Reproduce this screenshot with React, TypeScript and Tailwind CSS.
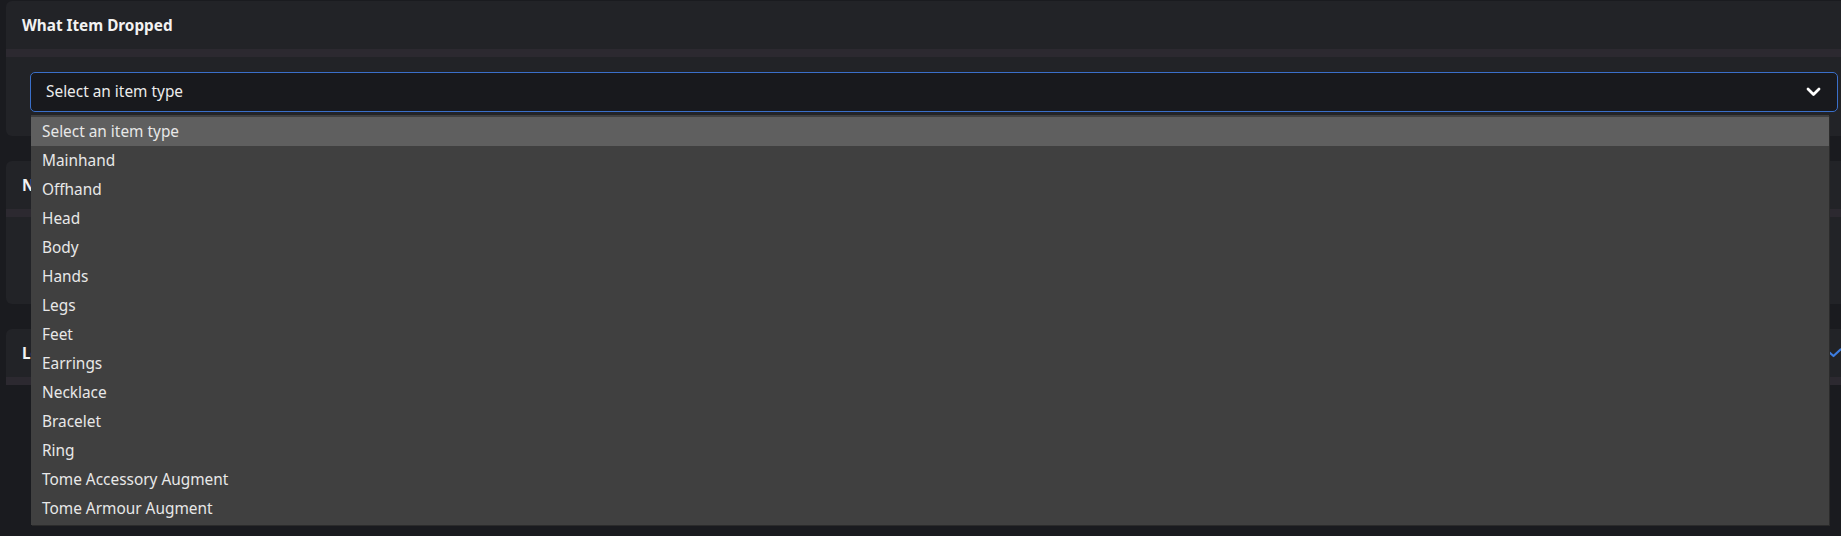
import React from 'react';

const itemTypes = [
  'Select an item type',
  'Mainhand',
  'Offhand',
  'Head',
  'Body',
  'Hands',
  'Legs',
  'Feet',
  'Earrings',
  'Necklace',
  'Bracelet',
  'Ring',
  'Tome Accessory Augment',
  'Tome Armour Augment',
];

const Card: React.FC<{ title: string; right?: React.ReactNode; bodyClass?: string; children?: React.ReactNode }> = ({
  title,
  right,
  bodyClass,
  children,
}) => (
  <div className="w-[1856px] rounded-md bg-[#222327] overflow-visible">
    <div className="h-[48px] flex items-center justify-between px-4">
      <span className="text-[15.3px] font-bold text-[#f2f2f2]">{title}</span>
      {right}
    </div>
    <div className="h-[8px] bg-[#2c2930]" />
    {bodyClass !== undefined && <div className={bodyClass}>{children}</div>}
  </div>
);

export default function App() {
  return (
    <div
      className="h-[536px] w-full overflow-hidden bg-[#1a1b1f] pt-px pl-[6px]"
      style={{ fontFamily: '"Noto Sans", "Open Sans", sans-serif' }}
    >
      <div className="flex flex-col gap-[25px]">
        <Card title="What Item Dropped" bodyClass="pt-[15px] pb-[24px] px-[24px] relative z-10">
          <div className="relative">
            <div className="h-[40px] w-[1808px] rounded-[5px] border-[1.5px] border-[#3a6fc9] bg-[#18191d] flex items-center justify-between pl-[15px] pr-[15px]">
              <span className="text-[15.4px] text-[#ececec]">Select an item type</span>
              <svg width="15" height="10" viewBox="0 0 15 10" className="mr-[1px]">
                <polyline points="2,2 7.5,7.5 13,2" fill="none" stroke="#ffffff" strokeWidth="2.8" strokeLinecap="round" strokeLinejoin="round" />
              </svg>
            </div>
            <div className="absolute left-[1px] top-[43px] w-[1798px] bg-[#404040] py-[2px] shadow-[1px_1px_0_#2b2b2b]">
              {itemTypes.map((t, i) => (
                <div
                  key={t}
                  className={
                    'h-[29px] flex items-center pl-[11px] text-[15.4px] text-[#e8e8e8] ' +
                    (i === 0 ? 'bg-[#5f5f5f]' : '')
                  }
                >
                  {t}
                </div>
              ))}
            </div>
          </div>
        </Card>
        <Card title="Need" bodyClass="h-[87px]" />
        <Card
          title="Loot"
          right={
            <svg width="14" height="10" viewBox="0 0 14 10" className="mr-[4px]">
              <polyline points="1.5,4.5 5.5,8 12.5,1.5" fill="none" stroke="#3d7de0" strokeWidth="2.2" strokeLinecap="round" strokeLinejoin="round" />
            </svg>
          }
        />
      </div>
    </div>
  );
}
